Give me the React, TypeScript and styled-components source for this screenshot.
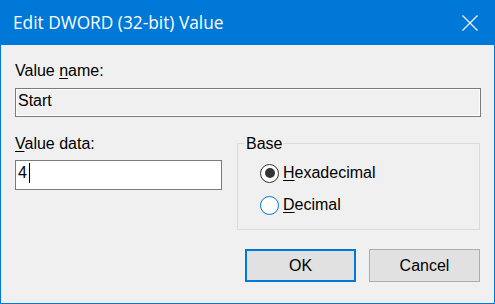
import React from "react";
import styled, { createGlobalStyle } from "styled-components";

const Global = createGlobalStyle`
  html, body { margin: 0; padding: 0; background: #f0f0f0; }
  body { font-family: "Liberation Sans", Arial, sans-serif; }
  * { box-sizing: border-box; }
`;

const Window = styled.div`
  width: 495px;
  height: 304px;
  display: flex;
  flex-direction: column;
  background: #f0f0f0;
  border: 1px solid #0078d7;
  border-top: none;
  font-family: "Liberation Sans", Arial, sans-serif;
  font-size: 16px;
  color: #000;
`;

const TitleBar = styled.div`
  height: 45px;
  flex: none;
  background: #0078d7;
  color: #fff;
  display: flex;
  align-items: center;
  justify-content: space-between;
  padding: 0 16px 0 12px;
`;

const Title = styled.div`
  font-family: "Segoe UI", "Open Sans", sans-serif;
  font-size: 17.3px;
  line-height: 23px;
`;

const CloseButton = styled.div`
  width: 16px;
  height: 16px;
  display: flex;
`;

const Content = styled.div`
  flex: 1;
  padding: 17px 13px 0 14px;
  display: flex;
  flex-direction: column;
`;

const Label = styled.div<{ $gap: number }>`
  line-height: 18px;
  height: 18px;
  margin-bottom: ${(p) => p.$gap}px;
  white-space: nowrap;
`;

const Key = styled.span`
  text-decoration: underline;
  text-underline-offset: 2px;
`;

const EditBox = styled.div<{ $readOnly?: boolean; $h: number }>`
  height: ${(p) => p.$h}px;
  border: 1px solid #7a7a7a;
  background: ${(p) => (p.$readOnly ? "#f0f0f0" : "#ffffff")};
  box-shadow: ${(p) => (p.$readOnly ? "inset 0 0 0 1px #ffffff" : "none")};
  padding: 3px 2px 0 2px;
  line-height: 18px;
  display: flex;
  align-items: flex-start;
`;

const Caret = styled.span`
  display: inline-block;
  width: 1px;
  height: 20px;
  margin-top: -1px;
  margin-left: 2px;
  background: #000;
`;

const Row = styled.div`
  margin-top: 18px;
  display: grid;
  grid-template-columns: 207px 243px;
  column-gap: 15px;
  align-items: start;
`;

const Column = styled.div`
  display: flex;
  flex-direction: column;
`;

const Group = styled.fieldset`
  margin: 0;
  padding: 0;
  border: 1px solid #dcdcdc;
  min-inline-size: 0;
  height: 95px;
`;

const Legend = styled.legend`
  margin-left: 6px;
  padding: 0 2px;
  line-height: 17px;
  height: 17px;
`;

const RadioList = styled.div`
  padding: 5px 0 8px 22px;
  display: flex;
  flex-direction: column;
`;

const RadioRow = styled.div`
  height: 32px;
  display: flex;
  align-items: center;
  gap: 4px;
  line-height: 18px;
`;

const RadioCircle = styled.span<{ $checked?: boolean; $hover?: boolean }>`
  width: 19px;
  height: 19px;
  flex: none;
  border-radius: 50%;
  background: #fff;
  border: 1.5px solid ${(p) => (p.$hover ? "#0078d7" : "#333333")};
  display: flex;
  align-items: center;
  justify-content: center;
  &::after {
    content: "";
    display: ${(p) => (p.$checked ? "block" : "none")};
    width: 10px;
    height: 10px;
    border-radius: 50%;
    background: #333333;
  }
`;

const ButtonRow = styled.div`
  margin-top: 19px;
  display: flex;
  justify-content: flex-end;
  gap: 13px;
  padding-right: 1px;
`;

const Button = styled.button<{ $default?: boolean }>`
  width: 111px;
  height: 33px;
  margin: 0;
  padding: 0;
  font-family: "Liberation Sans", Arial, sans-serif;
  font-size: 16px;
  color: #000;
  background: #e1e1e1;
  border: ${(p) => (p.$default ? "2px solid #0078d7" : "1px solid #adadad")};
  border-radius: 0;
`;

export default function App() {
  return (
    <>
      <Global />
      <Window>
        <TitleBar>
          <Title>Edit DWORD (32-bit) Value</Title>
          <CloseButton>
            <svg width="16" height="16" viewBox="0 0 16 16">
              <path d="M0.5 0.5 L15.5 15.5 M15.5 0.5 L0.5 15.5" stroke="#ffffff" strokeWidth="1.1" fill="none" />
            </svg>
          </CloseButton>
        </TitleBar>
        <Content>
          <Label $gap={8}>
            Value <Key>n</Key>ame:
          </Label>
          <EditBox $readOnly $h={29}>Start</EditBox>
          <Row>
            <Column>
              <Label $gap={7}>
                <Key>V</Key>alue data:
              </Label>
              <EditBox $h={30}>
                4<Caret />
              </EditBox>
            </Column>
            <Group>
              <Legend>Base</Legend>
              <RadioList>
                <RadioRow>
                  <RadioCircle $checked />
                  <span>
                    <Key>H</Key>exadecimal
                  </span>
                </RadioRow>
                <RadioRow>
                  <RadioCircle $hover />
                  <span>
                    <Key>D</Key>ecimal
                  </span>
                </RadioRow>
              </RadioList>
            </Group>
          </Row>
          <ButtonRow>
            <Button $default>OK</Button>
            <Button>Cancel</Button>
          </ButtonRow>
        </Content>
      </Window>
    </>
  );
}
